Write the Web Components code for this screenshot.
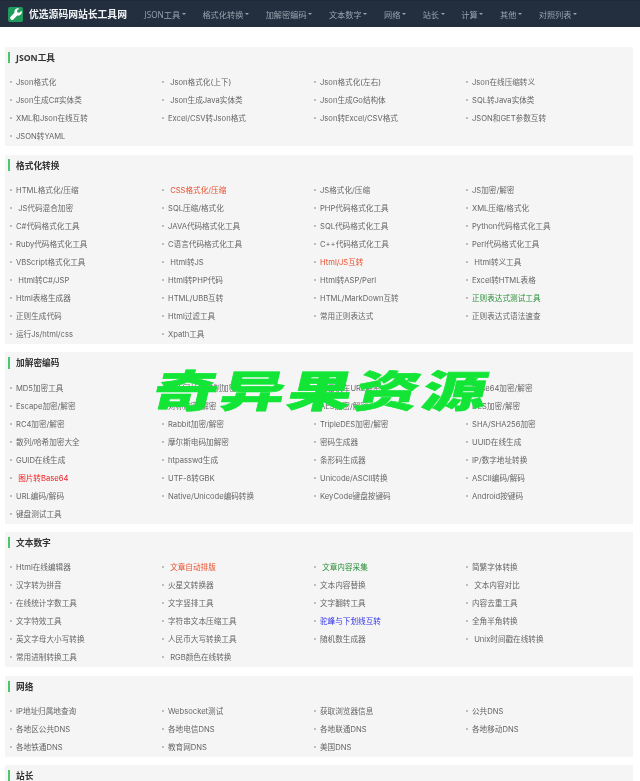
<!doctype html>
<html lang="zh">
<head>
<meta charset="utf-8">
<title>优选源码网站长工具网</title>
<style>
  html, body { margin: 0; height: 781px; overflow: hidden; background: #fff; }
  body { font-family: "Open Sans", "Noto Sans CJK SC", sans-serif; position: relative; }
  main { display: flex; flex-direction: column; gap: 8.5px; padding: 20px 7px 0 5px; filter: blur(.3px); }
</style>
</head>
<body>

<template id="top-bar-template">
  <style>
  :host {
    display: flex;
    align-items: center;
    height: 26px;
    padding-left: 8px;
    background: #232f3e;
    border-top: 1px solid #1f2a37;
    filter: blur(.3px);
  }
  .logo {
    width: 15px;
    height: 15px;
    border-radius: 2px;
    background: #1f9b5c;
    display: flex;
    align-items: center;
    justify-content: center;
    flex: none;
  }
  .brand {
    margin: 0 17.5px 0 6px;
    color: #f2f4f6;
    font-size: 9.8px;
    font-weight: 700;
    white-space: nowrap;
  }
  nav { display: flex; align-items: center; }
  </style>
  <span class="logo">
    <svg width="12" height="12" viewBox="0 0 16 16"><path fill="#fff" d="M15.3 3.6l-2.8 2.8-2.6-.5-.5-2.6L12.2.5C10.5-.1 8.5.3 7.2 1.6 5.9 2.9 5.5 4.7 6 6.3L.8 11.500c-.9.9-.9 2.3 0 3.200l.5.500c.9.9 2.300.9 3.200 0L9.700 10c1.600.5 3.400.1 4.700-1.200 1.300-1.300 1.600-3.500.9-5.200z"/></svg>
  </span>
  <span class="brand"><slot name="brand"></slot></span>
  <nav><slot></slot></nav>
</template>

<template id="top-link-template">
  <style>
  :host {
    display: inline-flex;
    align-items: center;
    margin-right: 16.8px;
    color: #98a3ae;
    font-size: 8.2px;
    white-space: nowrap;
  }
  .caret {
    margin-left: 1.5px;
    border-top: 2px solid #98a3ae;
    border-left: 2px solid transparent;
    border-right: 2px solid transparent;
  }
  </style>
  <slot></slot><span class="caret"></span>
</template>

<template id="tool-group-template">
  <style>
  :host {
    display: block;
    background: #f5f5f5;
    padding: 0 20px 1.5px 0;
  }
  h2 {
    margin: 0 0 4.7px;
    height: 21px;
    display: flex;
    align-items: center;
    color: #333;
    font-size: 8.7px;
    font-weight: 700;
  }
  h2::before {
    content: "";
    width: 2.5px;
    height: 11.5px;
    margin: 0 6px 0 2.5px;
    background: #4cc56c;
  }
  .grid { display: grid; grid-template-columns: repeat(4, 1fr); grid-auto-rows: 18px; }
  </style>
  <h2><slot name="title"></slot></h2>
  <div class="grid"><slot></slot></div>
</template>

<template id="tool-link-template">
  <style>
  :host {
    display: flex;
    align-items: center;
    color: #666;
    font-family: Inter, "Noto Sans CJK SC", sans-serif;
    font-size: 7.62px;
    white-space: pre;
  }
  :host([tone="orange"]) { color: #e8512f; }
  :host([tone="red"]) { color: #ee2222; }
  :host([tone="green"]) { color: #2c8f3a; }
  :host([tone="blue"]) { color: #3434e6; }
  i {
    width: 2px;
    height: 2px;
    margin: 1px 4px 0 5px;
    border-radius: 50%;
    background: #aaa;
    flex: none;
  }
  </style>
  <i></i><slot></slot>
</template>

<template id="water-mark-template">
  <style>
  :host {
    position: absolute;
    left: 155px;
    top: 358px;
    width: 332px;
    height: 60px;
    color: #12e536;
    font-size: 50px;
    font-weight: 900;
    line-height: 60px;
    white-space: nowrap;
    pointer-events: none;
  }
  span {
    display: inline-block;
    font-family: "Noto Sans CJK SC", sans-serif;
    transform-origin: 0 50%;
    transform: skewX(-13deg) scale(1.28, .87);
    letter-spacing: 2.5px;
    -webkit-text-stroke: .7px #12e536;
  }
  </style>
  <span><slot></slot></span>
</template>

<top-bar>
  <span slot="brand">优选源码网站长工具网</span>
  <top-link>JSON工具</top-link>
  <top-link>格式化转换</top-link>
  <top-link>加解密编码</top-link>
  <top-link>文本数字</top-link>
  <top-link>网络</top-link>
  <top-link>站长</top-link>
  <top-link>计算</top-link>
  <top-link>其他</top-link>
  <top-link>对照列表</top-link>
</top-bar>

<main>
  <tool-group>
    <span slot="title">JSON工具</span>
    <tool-link>Json格式化</tool-link>
    <tool-link>&nbsp;Json格式化(上下)</tool-link>
    <tool-link>Json格式化(左右)</tool-link>
    <tool-link>Json在线压缩转义</tool-link>
    <tool-link>Json生成C#实体类</tool-link>
    <tool-link>&nbsp;Json生成Java实体类</tool-link>
    <tool-link>Json生成Go结构体</tool-link>
    <tool-link>SQL转Java实体类</tool-link>
    <tool-link>XML和Json在线互转</tool-link>
    <tool-link>Excel/CSV转Json格式</tool-link>
    <tool-link>Json转Excel/CSV格式</tool-link>
    <tool-link>JSON和GET参数互转</tool-link>
    <tool-link>JSON转YAML</tool-link>
  </tool-group>

  <tool-group>
    <span slot="title">格式化转换</span>
    <tool-link>HTML格式化/压缩</tool-link>
    <tool-link tone="orange">&nbsp;CSS格式化/压缩</tool-link>
    <tool-link>JS格式化/压缩</tool-link>
    <tool-link>JS加密/解密</tool-link>
    <tool-link>&nbsp;JS代码混合加密</tool-link>
    <tool-link>SQL压缩/格式化</tool-link>
    <tool-link>PHP代码格式化工具</tool-link>
    <tool-link>XML压缩/格式化</tool-link>
    <tool-link>C#代码格式化工具</tool-link>
    <tool-link>JAVA代码格式化工具</tool-link>
    <tool-link>SQL代码格式化工具</tool-link>
    <tool-link>Python代码格式化工具</tool-link>
    <tool-link>Ruby代码格式化工具</tool-link>
    <tool-link>C语言代码格式化工具</tool-link>
    <tool-link>C++代码格式化工具</tool-link>
    <tool-link>Perl代码格式化工具</tool-link>
    <tool-link>VBScript格式化工具</tool-link>
    <tool-link>&nbsp;Html转JS</tool-link>
    <tool-link tone="orange">Html/JS互转</tool-link>
    <tool-link>&nbsp;Html转义工具</tool-link>
    <tool-link>&nbsp;Html转C#/JSP</tool-link>
    <tool-link>Html转PHP代码</tool-link>
    <tool-link>Html转ASP/Perl</tool-link>
    <tool-link>Excel转HTML表格</tool-link>
    <tool-link>Html表格生成器</tool-link>
    <tool-link>HTML/UBB互转</tool-link>
    <tool-link>HTML/MarkDown互转</tool-link>
    <tool-link tone="green">正则表达式测试工具</tool-link>
    <tool-link>正则生成代码</tool-link>
    <tool-link>Html过滤工具</tool-link>
    <tool-link>常用正则表达式</tool-link>
    <tool-link>正则表达式语法速查</tool-link>
    <tool-link>运行Js/html/css</tool-link>
    <tool-link>Xpath工具</tool-link>
  </tool-group>

  <tool-group>
    <span slot="title">加解密编码</span>
    <tool-link>MD5加密工具</tool-link>
    <tool-link>URL网址16进制加密</tool-link>
    <tool-link>迅雷快车URL解密</tool-link>
    <tool-link>Base64加密/解密</tool-link>
    <tool-link>Escape加密/解密</tool-link>
    <tool-link>对称加密/解密</tool-link>
    <tool-link>AES加密/解密</tool-link>
    <tool-link>DES加密/解密</tool-link>
    <tool-link>RC4加密/解密</tool-link>
    <tool-link>Rabbit加密/解密</tool-link>
    <tool-link>TripleDES加密/解密</tool-link>
    <tool-link>SHA/SHA256加密</tool-link>
    <tool-link>散列/哈希加密大全</tool-link>
    <tool-link>摩尔斯电码加解密</tool-link>
    <tool-link>密码生成器</tool-link>
    <tool-link>UUID在线生成</tool-link>
    <tool-link>GUID在线生成</tool-link>
    <tool-link>htpasswd生成</tool-link>
    <tool-link>条形码生成器</tool-link>
    <tool-link>IP/数字地址转换</tool-link>
    <tool-link tone="red">&nbsp;图片转Base64</tool-link>
    <tool-link>UTF-8转GBK</tool-link>
    <tool-link>Unicode/ASCII转换</tool-link>
    <tool-link>ASCII编码/解码</tool-link>
    <tool-link>URL编码/解码</tool-link>
    <tool-link>Native/Unicode编码转换</tool-link>
    <tool-link>KeyCode键盘按键码</tool-link>
    <tool-link>Android按键码</tool-link>
    <tool-link>键盘测试工具</tool-link>
  </tool-group>

  <tool-group>
    <span slot="title">文本数字</span>
    <tool-link>Html在线编辑器</tool-link>
    <tool-link tone="orange">&nbsp;文章自动排版</tool-link>
    <tool-link tone="green">&nbsp;文章内容采集</tool-link>
    <tool-link>简繁字体转换</tool-link>
    <tool-link>汉字转为拼音</tool-link>
    <tool-link>火星文转换器</tool-link>
    <tool-link>文本内容替换</tool-link>
    <tool-link>&nbsp;文本内容对比</tool-link>
    <tool-link>在线统计字数工具</tool-link>
    <tool-link>文字竖排工具</tool-link>
    <tool-link>文字翻转工具</tool-link>
    <tool-link>内容去重工具</tool-link>
    <tool-link>文字特效工具</tool-link>
    <tool-link>字符串文本压缩工具</tool-link>
    <tool-link tone="blue">驼峰与下划线互转</tool-link>
    <tool-link>全角半角转换</tool-link>
    <tool-link>英文字母大小写转换</tool-link>
    <tool-link>人民币大写转换工具</tool-link>
    <tool-link>随机数生成器</tool-link>
    <tool-link>&nbsp;Unix时间戳在线转换</tool-link>
    <tool-link>常用进制转换工具</tool-link>
    <tool-link>&nbsp;RGB颜色在线转换</tool-link>
  </tool-group>

  <tool-group>
    <span slot="title">网络</span>
    <tool-link>IP地址归属地查询</tool-link>
    <tool-link>Websocket测试</tool-link>
    <tool-link>获取浏览器信息</tool-link>
    <tool-link>公共DNS</tool-link>
    <tool-link>各地区公共DNS</tool-link>
    <tool-link>各地电信DNS</tool-link>
    <tool-link>各地联通DNS</tool-link>
    <tool-link>各地移动DNS</tool-link>
    <tool-link>各地铁通DNS</tool-link>
    <tool-link>教育网DNS</tool-link>
    <tool-link>美国DNS</tool-link>
  </tool-group>

  <tool-group>
    <span slot="title">站长</span>
  </tool-group>
</main>

<water-mark>奇异果资源</water-mark>

<script>
  {
    'use strict';
    // every element just clones its template, styling lives in the shadow root
    const names = ['top-bar', 'top-link', 'tool-group', 'tool-link', 'water-mark'];
    for (let name of names) {
      const tpl = document.getElementById(name + '-template');
      customElements.define(name, class extends HTMLElement {
        constructor() {
          super();
          this.attachShadow({mode: 'open'}).appendChild(tpl.content.cloneNode(true));
        }
      });
    }
  }
</script>
</body>
</html>
